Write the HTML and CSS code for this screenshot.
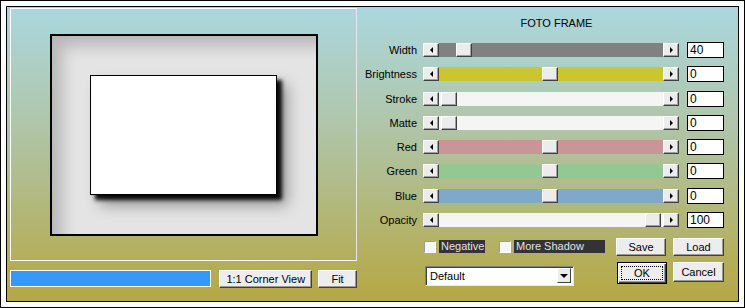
FILE: index.html
```html
<!DOCTYPE html>
<html lang="en">
<head>
    <meta charset="UTF-8">
    <title>Foto Frame</title>
    <link rel="stylesheet" href="styles.css">
</head>
<body>

<div class="dialog">
    <div class="panel">

        <!-- Preview -->
        <div class="left">
            <div class="preview">
                <div class="frame">
                    <div class="photo"></div>
                </div>
            </div>
            <div class="left-bar">
                <div class="progress"></div>
                <button class="btn btn-corner">1:1 Corner View</button>
                <button class="btn btn-fit">Fit</button>
            </div>
        </div>

        <!-- Settings -->
        <div class="right">
            <div class="title">FOTO FRAME</div>

            <div class="sliders">
                <div class="row">
                    <span class="label">Width</span>
                    <div class="slider">
                        <span class="arrow arrow-left"></span>
                        <div class="track track-width"><span class="thumb" style="margin-left: 17px"></span></div>
                        <span class="arrow arrow-right"></span>
                    </div>
                    <div class="value">40</div>
                </div>
                <div class="row">
                    <span class="label">Brightness</span>
                    <div class="slider">
                        <span class="arrow arrow-left"></span>
                        <div class="track track-bright"><span class="thumb" style="margin-left: 103px"></span></div>
                        <span class="arrow arrow-right"></span>
                    </div>
                    <div class="value">0</div>
                </div>
                <div class="row">
                    <span class="label">Stroke</span>
                    <div class="slider">
                        <span class="arrow arrow-left"></span>
                        <div class="track track-light"><span class="thumb" style="margin-left: 2px"></span></div>
                        <span class="arrow arrow-right"></span>
                    </div>
                    <div class="value">0</div>
                </div>
                <div class="row">
                    <span class="label">Matte</span>
                    <div class="slider">
                        <span class="arrow arrow-left"></span>
                        <div class="track track-light"><span class="thumb" style="margin-left: 2px"></span></div>
                        <span class="arrow arrow-right"></span>
                    </div>
                    <div class="value">0</div>
                </div>
                <div class="row">
                    <span class="label">Red</span>
                    <div class="slider">
                        <span class="arrow arrow-left"></span>
                        <div class="track track-red"><span class="thumb" style="margin-left: 103px"></span></div>
                        <span class="arrow arrow-right"></span>
                    </div>
                    <div class="value">0</div>
                </div>
                <div class="row">
                    <span class="label">Green</span>
                    <div class="slider">
                        <span class="arrow arrow-left"></span>
                        <div class="track track-green"><span class="thumb" style="margin-left: 103px"></span></div>
                        <span class="arrow arrow-right"></span>
                    </div>
                    <div class="value">0</div>
                </div>
                <div class="row">
                    <span class="label">Blue</span>
                    <div class="slider">
                        <span class="arrow arrow-left"></span>
                        <div class="track track-blue"><span class="thumb" style="margin-left: 103px"></span></div>
                        <span class="arrow arrow-right"></span>
                    </div>
                    <div class="value">0</div>
                </div>
                <div class="row">
                    <span class="label">Opacity</span>
                    <div class="slider">
                        <span class="arrow arrow-left"></span>
                        <div class="track track-light"><span class="thumb" style="margin-left: 206px"></span></div>
                        <span class="arrow arrow-right"></span>
                    </div>
                    <div class="value">100</div>
                </div>
            </div>

            <div class="options">
                <span class="check"></span>
                <span class="check-label label-negative">Negative</span>
                <span class="check check-second"></span>
                <span class="check-label label-shadow">More Shadow</span>
                <button class="btn btn-save">Save</button>
                <button class="btn btn-load">Load</button>
            </div>

            <div class="actions">
                <div class="select">
                    <span class="select-text">Default</span>
                    <span class="select-arrow"></span>
                </div>
                <button class="btn btn-ok"><span class="focus">OK</span></button>
                <button class="btn btn-cancel">Cancel</button>
            </div>
        </div>

    </div>
</div>

</body>
</html>
```

FILE: styles.css
```css
/* General Styling */
* {
    box-sizing: border-box;
}

body {
    margin: 0;
    background-color: #fff;
    font-family: "Liberation Sans", Arial, sans-serif;
    font-size: 11px;
    color: #000;
}

.dialog {
    width: 745px;
    height: 308px;
    border: 1px solid #000;
    padding: 5px;
    background-color: #fff;
}

.panel {
    height: 100%;
    display: flex;
    border: 1px solid #000;
    background: linear-gradient(#abd7df 0%, #afc8b0 35%, #b1bb86 62%, #b6a742 100%);
}

/* Buttons */
.btn {
    font-family: inherit;
    font-size: 11px;
    color: #000;
    background-color: #ededed;
    border: 1px solid;
    border-color: #fff #404040 #404040 #fff;
    box-shadow: inset -1px -1px #9a9a9a;
    padding: 0;
    height: 18px;
}

/* Preview Styling */
.left {
    margin-left: 3px;
    margin-top: 1px;
    width: 347px;
}

.preview {
    height: 253px;
    display: flex;
    align-items: center;
    justify-content: center;
    border: 1px solid #fff;
    border-right-color: #e8e8e8;
}

.frame {
    width: 268px;
    height: 202px;
    display: flex;
    align-items: center;
    justify-content: center;
    border: 2px solid #000;
    background-color: #e4e4e4;
    box-shadow: inset 16px 16px 16px -6px rgba(0, 0, 0, 0.2);
}

.photo {
    width: 187px;
    height: 120px;
    border: 1px solid #000;
    background-color: #fff;
    box-shadow: 5px 5px 4px rgba(0, 0, 0, 0.95), 10px 10px 14px rgba(0, 0, 0, 0.35);
}

.left-bar {
    display: flex;
    align-items: flex-start;
    margin-top: 9px;
}

.progress {
    width: 202px;
    height: 17px;
    border: 1px solid #fff;
    background-color: #3598fa;
}

.btn-corner {
    width: 93px;
    margin-left: 8px;
}

.btn-fit {
    width: 39px;
    margin-left: 6px;
}

/* Settings Styling */
.right {
    flex: 1;
    padding-top: 10px;
}

.title {
    line-height: 13px;
    text-align: center;
    padding-left: 18px;
    margin-bottom: 12px;
}

.sliders {
    display: flex;
    flex-direction: column;
    gap: 8.29px;
}

.row {
    display: flex;
    align-items: center;
    height: 16px;
}

.label {
    width: 60px;
    margin-right: 6px;
    text-align: right;
}

.slider {
    display: flex;
    width: 256px;
    height: 14px;
}

.arrow,
.thumb {
    width: 16px;
    height: 14px;
    flex: none;
    background-color: #ececec;
    border: 1px solid;
    border-color: #fff #404040 #404040 #fff;
    box-shadow: inset -1px -1px #a0a0a0;
}

.arrow {
    display: flex;
    align-items: center;
    justify-content: center;
}

.arrow::after {
    content: "";
    border-top: 3px solid transparent;
    border-bottom: 3px solid transparent;
}

.arrow-left::after {
    border-right: 3px solid #000;
}

.arrow-right::after {
    border-left: 3px solid #000;
}

.track {
    flex: 1;
    display: flex;
}

.track-width { background-color: #818181; }
.track-bright { background-color: #cbc52f; }
.track-light { background-color: #f5f5f3; }
.track-red { background-color: #c99596; }
.track-green { background-color: #94c792; }
.track-blue { background-color: #80a9c9; }

.value {
    width: 37px;
    height: 16px;
    margin-left: 8px;
    padding-left: 2px;
    border: 1px solid #000;
    background-color: #fff;
    font-size: 12px;
    line-height: 14px;
}

/* Options */
.options {
    display: flex;
    align-items: center;
    height: 18px;
    margin-top: 10px;
    padding-left: 67px;
}

.check {
    width: 12px;
    height: 12px;
    background-color: #f6f6f6;
    border: 1px solid;
    border-color: #9a9a9a #fff #fff #9a9a9a;
}

.check-second {
    margin-left: 14px;
}

.check-label {
    height: 13px;
    margin-left: 3px;
    padding-left: 2px;
    line-height: 13px;
    background-color: #333;
    color: #e4e4e4;
}

.label-negative {
    width: 46px;
}

.label-shadow {
    width: 91px;
}

.btn-save {
    width: 50px;
    margin-left: 11px;
}

.btn-load {
    width: 51px;
    margin-left: 7px;
}

/* Actions */
.actions {
    display: flex;
    align-items: flex-start;
    margin-top: 6px;
    padding-left: 68px;
}

.select {
    width: 149px;
    height: 20px;
    margin-top: 4px;
    display: flex;
    align-items: center;
    background-color: #fff;
    border: 1px solid;
    border-color: #808080 #e8e8e8 #e8e8e8 #808080;
    box-shadow: inset 1px 1px #404040;
}

.select-text {
    flex: 1;
    padding-left: 4px;
}

.select-arrow {
    width: 14px;
    height: 15px;
    margin-right: 2px;
    display: flex;
    align-items: center;
    justify-content: center;
    background-color: #ececec;
    border: 1px solid;
    border-color: #fff #404040 #404040 #fff;
}

.select-arrow::after {
    content: "";
    border-left: 4px solid transparent;
    border-right: 4px solid transparent;
    border-top: 4px solid #000;
}

.btn-ok {
    width: 50px;
    height: 22px;
    margin-left: 43px;
    padding: 3px;
    display: flex;
    border: 1px solid #000;
    box-shadow: inset 1px 1px #fff, inset -1px -1px #404040, inset -2px -2px #9a9a9a;
}

.focus {
    flex: 1;
    border: 1px dotted #000;
    line-height: 12px;
}

.btn-cancel {
    width: 51px;
    height: 20px;
    margin-left: 6px;
}
```
